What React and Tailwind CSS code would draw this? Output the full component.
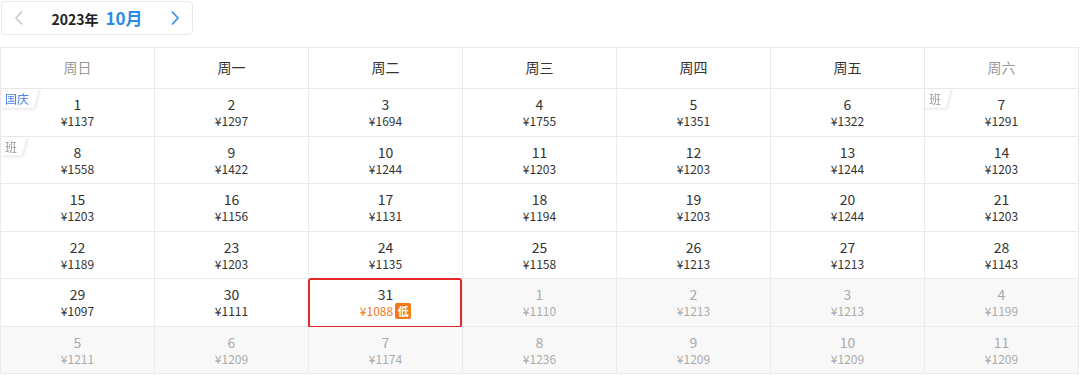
import React from 'react';

const weekDays = ['周日', '周一', '周二', '周三', '周四', '周五', '周六'];

const days = [
  { d: 1, p: 1137, tag: '国庆' }, { d: 2, p: 1297 }, { d: 3, p: 1694 }, { d: 4, p: 1755 }, { d: 5, p: 1351 }, { d: 6, p: 1322 }, { d: 7, p: 1291, tag: '班' },
  { d: 8, p: 1558, tag: '班' }, { d: 9, p: 1422 }, { d: 10, p: 1244 }, { d: 11, p: 1203 }, { d: 12, p: 1203 }, { d: 13, p: 1244 }, { d: 14, p: 1203 },
  { d: 15, p: 1203 }, { d: 16, p: 1156 }, { d: 17, p: 1131 }, { d: 18, p: 1194 }, { d: 19, p: 1203 }, { d: 20, p: 1244 }, { d: 21, p: 1203 },
  { d: 22, p: 1189 }, { d: 23, p: 1203 }, { d: 24, p: 1135 }, { d: 25, p: 1158 }, { d: 26, p: 1213 }, { d: 27, p: 1213 }, { d: 28, p: 1143 },
  { d: 29, p: 1097 }, { d: 30, p: 1111 }, { d: 31, p: 1088, low: true }, { d: 1, p: 1110, next: true }, { d: 2, p: 1213, next: true }, { d: 3, p: 1213, next: true }, { d: 4, p: 1199, next: true },
  { d: 5, p: 1211, next: true }, { d: 6, p: 1209, next: true }, { d: 7, p: 1174, next: true }, { d: 8, p: 1236, next: true }, { d: 9, p: 1209, next: true }, { d: 10, p: 1209, next: true }, { d: 11, p: 1209, next: true },
];

// little holiday / workday label in the cell corner
const Tag = ({ text }) => (
  <div className="absolute left-0 top-0 drop-shadow-[1px_1px_1.5px_rgba(0,0,0,0.12)]">
    <div
      className={`h-[19px] pl-[4px] pr-[10px] bg-white text-[12px] leading-[19px] ${
        text === '国庆' ? 'text-[#4a82e6]' : 'text-[#999]'
      }`}
      style={{ clipPath: 'polygon(0 0, 100% 0, calc(100% - 5px) 100%, 0 100%)' }}
    >
      {text}
    </div>
  </div>
);

const App = () => {
  return (
    <div className="w-[1080px] h-[377px] bg-white font-['Noto_Sans_CJK_SC','Noto_Sans',sans-serif] text-[#333] overflow-hidden">
      {/* Month switcher */}
      <div className="ml-[1px] mt-[1px] w-[192px] h-[34px] border border-[#e8e8e8] rounded-[4px] flex items-center justify-between px-[12px]">
        <svg width="10" height="16" viewBox="0 0 10 16" fill="none">
          <path d="M8 1.5L2 8l6 6.5" stroke="#c8c8c8" strokeWidth="1.6" />
        </svg>
        <div className="flex items-baseline gap-[7px]">
          <span className="text-[14px] font-bold text-[#222]">2023年</span>
          <span className="text-[17px] font-bold text-[#2a8bea]">10月</span>
        </div>
        <svg width="10" height="16" viewBox="0 0 10 16" fill="none">
          <path d="M2 1.5L8 8l-6 6.5" stroke="#2a8bea" strokeWidth="1.6" />
        </svg>
      </div>

      {/* Calendar grid */}
      <div className="mt-[12px] w-[1079px] border-t border-l border-[#ebebeb]">
        <div className="grid grid-cols-7">
          {weekDays.map((w, i) => (
            <div
              key={w}
              className={`h-[41px] pb-[2px] flex items-center justify-center border-r border-b border-[#ebebeb] text-[14px] ${
                i === 0 || i === 6 ? 'text-[#999]' : 'text-[#333]'
              }`}
            >
              {w}
            </div>
          ))}
          {days.map((c, i) => (
            <div
              key={i}
              className={`relative h-[47.5px] flex flex-col items-center justify-center border-r border-b border-[#ebebeb] ${
                c.next ? 'bg-[#f8f8f8]' : 'bg-white'
              }`}
            >
              {c.tag && <Tag text={c.tag} />}
              {c.low && (
                <div className="absolute left-[-1px] top-[-1px] w-[154px] h-[50px] border-2 border-[#e62828] rounded-[3px]" />
              )}
              <div className={`text-[14px] leading-[18px] ${c.next ? 'text-[#aaa]' : 'text-[#333]'}`}>{c.d}</div>
              <div className={`flex items-center text-[12px] leading-[16px] ${c.low ? 'text-[#f07a1c]' : c.next ? 'text-[#aaa]' : 'text-[#333]'}`}>
                ¥{c.p}
                {c.low && (
                  <span className="ml-[2px] w-[16px] h-[16px] bg-[#f07a1c] text-white text-[11px] leading-[16px] font-bold text-center rounded-[2px]">低</span>
                )}
              </div>
            </div>
          ))}
        </div>
      </div>
    </div>
  );
};

export default App;
